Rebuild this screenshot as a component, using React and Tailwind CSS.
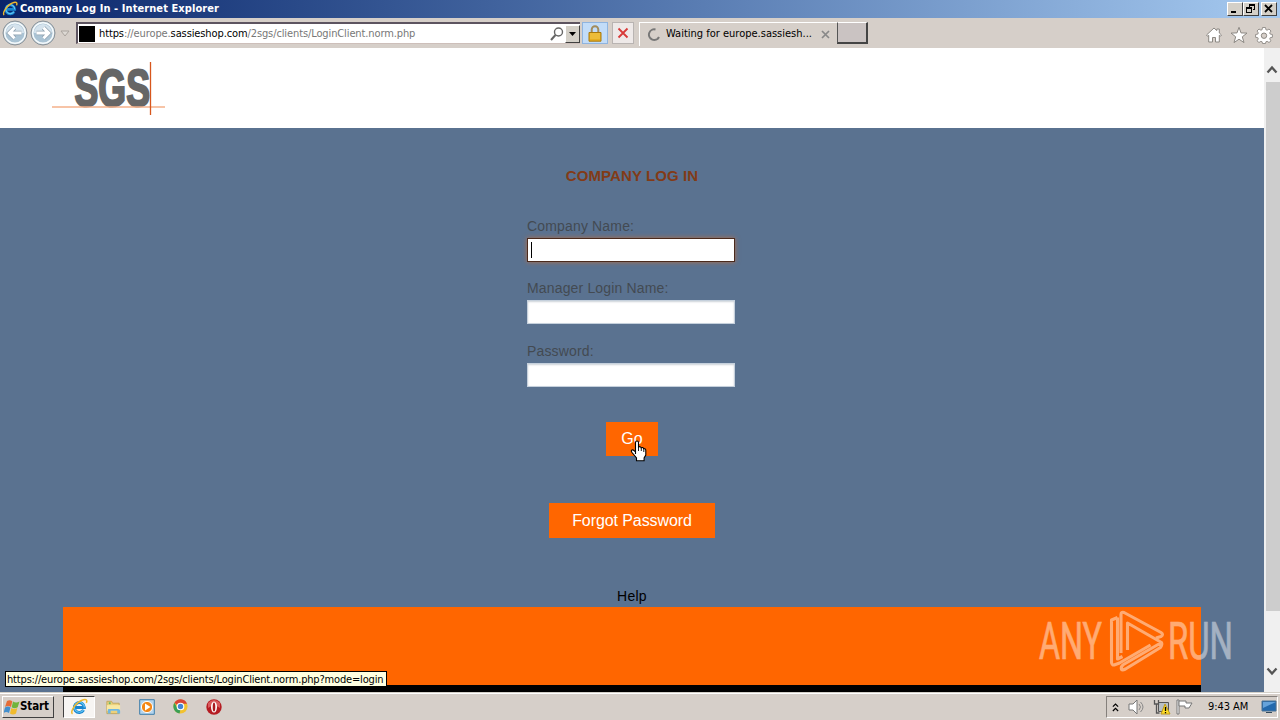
import React from "react";

const ui = "font-['DejaVu_Sans_Condensed','DejaVu_Sans',sans-serif] whitespace-nowrap";

function IELogo({ className }) {
  return (
    <svg viewBox="0 0 18 18" className={className}>
      <path d="M13.6 12.1A5 5 0 1 1 14.3 9.4H5.2" fill="none" stroke="#1784cf" strokeWidth="3" />
      <path d="M13.6 11.8A5 5 0 1 1 14.3 9.4" fill="none" stroke="#63c6f3" strokeWidth="1.2" />
      <path d="M2.5 15.8C-.4 14 5.8 3.8 13.3 1.7c3.6-1 4 1.1 3 3.2" fill="none" stroke="#eeb82e" strokeWidth="1.5" />
    </svg>
  );
}

function WinButton({ children, className = "" }) {
  return (
    <div className={`flex h-[14px] w-4 items-center justify-center border border-t-white border-l-white border-r-[#404040] border-b-[#404040] bg-[#d4d0c8] ${className}`}>
      <svg viewBox="0 0 14 12" className="h-3 w-[14px]" shapeRendering="crispEdges">{children}</svg>
    </div>
  );
}

function TitleBar() {
  return (
    <div className="flex h-[18px] items-center bg-linear-to-r from-[#0a246a] to-[#a6caf0] pr-[3px] pl-[2px]">
      <IELogo className="h-4 w-4" />
      <span className={`${ui} ml-[2px] text-[11px] leading-[16px] font-bold tracking-[0.08px] text-white`}>
        Company Log In - Internet Explorer
      </span>
      <div className="ml-auto flex">
        <WinButton><path d="M3 8h5v2H3z" /></WinButton>
        <WinButton><path d="M5 1h6v2H5zM10 3h1v4h-1zM9 6h1v1H9zM5 3h1v1H5zM2 4h6v2H2zM2 6h1v4H2zM7 6h1v4H7zM2 9h6v1H2z" /></WinButton>
        <WinButton className="ml-[2px]"><path d="M3 2l7 7M10 2L3 9" stroke="#000" strokeWidth="1.8" shapeRendering="auto" /></WinButton>
      </div>
    </div>
  );
}

function NavCircle({ flip }) {
  return (
    <svg viewBox="0 0 26 26" className="h-[26px] w-[28px]">
      <circle cx="13" cy="13" r="12" fill="#b9cbd6" stroke="#8b9298" />
      <circle cx="13" cy="13" r="10.3" fill="#aac3d4" stroke="#f5fafc" strokeWidth="1.5" />
      <path d="M4 13a9 9 0 0 1 18 0z" fill="#d5e3ed" />
      <g transform={flip ? "translate(26 0) scale(-1 1)" : undefined} fill="none">
        <path d="M19.5 13H8M12.5 7.8 7.3 13l5.2 5.2" stroke="#91a3b1" strokeWidth="4.5" />
        <path d="M19.5 13H8M12.5 7.8 7.3 13l5.2 5.2" stroke="#fff" strokeWidth="3" />
      </g>
    </svg>
  );
}

function Toolbar() {
  return (
    <div className="flex h-[30px] items-start bg-[#d6cfc9] pt-[2px]">
      <div className="flex h-[26px] w-[75px] items-center pl-[1px]">
        <NavCircle />
        <NavCircle flip />
        <svg viewBox="0 0 10 7" className="ml-[3px] h-[7px] w-[10px]"><path d="M1 1h8L5 6z" fill="#ddd9d4" stroke="#aaa49e" /></svg>
      </div>
      <div className="mt-[2px] ml-[1px] flex h-[22px] w-[504px] items-center border-t-2 border-l-2 border-t-[#5d5460] border-l-[#5d5460] border-b border-b-[#cdbfba] bg-white">
        <div className="ml-[1px] h-4 w-4 bg-black" />
        <span className={`${ui} mt-px ml-[4px] text-[11px] tracking-[-0.11px] text-[#777]`}>
          <span className="text-black">https</span>://europe.<span className="text-black">sassieshop.com</span>/2sgs/clients/LoginClient.norm.php
        </span>
        <svg viewBox="0 0 16 16" className="ml-auto h-4 w-[17px]"><circle cx="10" cy="6" r="4" fill="none" stroke="#666" strokeWidth="1.4" /><path d="M7 9 2.5 14" stroke="#666" strokeWidth="2" /></svg>
        <div className="flex h-[18px] w-[15px] items-center justify-center border border-t-white border-l-white border-r-[#404040] border-b-[#404040] bg-[#d4d0c8]">
          <svg viewBox="0 0 7 4" className="h-1 w-[7px]"><path d="M0 0h7L3.5 4z" /></svg>
        </div>
      </div>
      <div className="mt-[2px] ml-[2px] flex h-[22px] w-[26px] items-center justify-center border border-[#8fb4df] bg-[#c2dcf8]">
        <svg viewBox="0 0 14 17" className="h-[17px] w-[14px]">
          <path d="M3.7 8V4.5a3.3 3.3 0 0 1 6.6 0V8" fill="none" stroke="#a38c5c" strokeWidth="2" />
          <path d="M1 7.5h12v8.7H1z" fill="#e6ae20" stroke="#a8780c" />
          <path d="M2 9h10M2 11h10M2 13h10" stroke="#f9d769" strokeWidth=".7" />
        </svg>
      </div>
      <div className="mt-[2px] ml-[4px] flex h-[22px] w-[22px] items-center justify-center border border-[#b9b4b2] bg-[#eee9e8]">
        <svg viewBox="0 0 12 12" className="h-3 w-3"><path d="m1.5 1.5 9 9m0-9-9 9" stroke="#d83a39" strokeWidth="1.8" /></svg>
      </div>
      <div className="mt-[2px] ml-[5px] flex h-[24px] w-[198px] items-center border-t border-l border-white pl-[7px]">
        <svg viewBox="0 0 14 14" className="h-[14px] w-[14px]"><path d="M8.5 1.5A5.3 5.3 0 1 0 12 9" fill="none" stroke="#777" strokeWidth="2" /></svg>
        <span className={`${ui} ml-[5px] text-[11px] tracking-[0px] text-black`}>Waiting for europe.sassiesh...</span>
        <svg viewBox="0 0 9 9" className="ml-auto mr-[7px] h-[9px] w-[9px]"><path d="m1 1 7 7m0-7L1 8" stroke="#888" strokeWidth="1.7" /></svg>
      </div>
      <div className="mt-[2px] h-[22px] w-[31px] border border-t-white border-l-[#555] border-r-2 border-b-2 border-r-[#444] border-b-[#444] bg-[#cac3c2]" />
      <div className="mt-[6px] mr-[7px] ml-auto flex gap-[7px]">
        <svg viewBox="0 0 18 18" className="h-[18px] w-[18px]"><path d="M1.5 9 9 2l2.8 2.6V3h2.5v4L16.5 9l-1 1.2-1.2-.9V16h-3.8v-4.5h-3V16H3.7V9.3l-1.2.9z" fill="#fff" stroke="#8c8883" /></svg>
        <svg viewBox="0 0 18 18" className="h-[18px] w-[18px]"><path d="m9 1.3 2 5.6 6 .2-4.7 3.7 1.7 5.8L9 13.2l-5 3.4 1.7-5.8L1 7.1l6-.2z" fill="#fff" stroke="#8c8883" /></svg>
        <svg viewBox="0 0 18 18" className="h-[18px] w-[18px]">
          <path d="M7.5 1.5h3l.4 2.2 1.2.5L14 3l2 2-1.3 1.9.5 1.2 2.2.4v2.8l-2.2.4-.5 1.2L16 14.8l-2 1.7-1.9-1.2-1.2.5-.4 1.7h-3l-.4-1.7-1.2-.5L4 16.5l-2-1.7 1.3-1.9-.5-1.2-2.2-.4V8.5l2.2-.4.5-1.2L2 5l2-2 1.9 1.2 1.2-.5z" fill="#fff" stroke="#8c8883" strokeWidth=".9" />
          <circle cx="9" cy="9.7" r="2.7" fill="#d6cfc9" stroke="#8c8883" />
        </svg>
      </div>
    </div>
  );
}

function Brand() {
  return (
    <svg viewBox="0 -8 114 72" className="h-[72px] w-[114px]">
      <text x="22.5" y="44.3" textLength="75.5" lengthAdjust="spacingAndGlyphs" fontSize="51" fontWeight="700" fill="#666" stroke="#666" strokeWidth="2.2" className="font-['Liberation_Sans_Narrow','Liberation_Sans',sans-serif]">SGS</text>
      <path d="M0 45h113" stroke="#f5b08a" strokeWidth="1.5" />
      <path d="M98.5 0v53" stroke="#d7561d" strokeWidth="1.3" />
    </svg>
  );
}

function Field({ label, focused, className }) {
  return (
    <label className={`block w-[208px] ${className}`}>
      <span className="block h-[22px] text-[14px] leading-[20px] tracking-[0.16px] whitespace-nowrap text-[#434a52]">{label}</span>
      <div className={focused
        ? "flex h-6 items-center border border-[#4b2a1c] bg-white pl-[3px] shadow-[0_0_5px_#b06c48]"
        : "flex h-6 items-center border border-[#c5d0dc] bg-white pl-[3px] shadow-[inset_0_1px_2px_#ccd2d8]"}>
        {focused && <div className="h-4 w-px bg-black" />}
      </div>
    </label>
  );
}

function HandCursor() {
  return (
    <svg viewBox="0 0 17 22" className="absolute top-[18px] left-[24px] h-[22px] w-[17px]">
      <path d="M5.5 14V2.5q0-1.5 1.5-1.5t1.5 1.5V7q2-1 2.6.7 2-.8 2.4 1 2.3-.5 2.3 1.8V15l-1.7 3v2.7H6.5V18L2 12.5Q.7 10.6 2 10t3.5 2z" fill="#fff" stroke="#000" strokeWidth="1.1" />
      <path d="M8.5 7v4m2.8-3v3m2.5-2v3" stroke="#000" strokeWidth=".9" />
    </svg>
  );
}

function Watermark() {
  return (
    <svg viewBox="0 -4 206 74" className="absolute top-[556px] left-[1036px] h-[74px] w-[206px] opacity-45">
      <g fill="#fff" stroke="#fff" strokeWidth=".7" fontSize="52" fontWeight="400" className="font-[Roboto,'Open_Sans',sans-serif]">
        <text x="3" y="51" textLength="63" lengthAdjust="spacingAndGlyphs">ANY</text>
        <text x="132" y="51" textLength="65" lengthAdjust="spacingAndGlyphs">RUN</text>
      </g>
      <path
        d="M81.5 9.5 75.5 12V54q0 4 4 2.5l4-1.5 31-18M81.5 9.5V51l5-2.500M120 30l5-1.500q3-2 0-4L88 4.500q-3-1-3 2V45M91.500 42V15l34 19.500-38 22q-3 2-2 5 1 1 4-.5l35-21.500q2-3 1-5"
        fill="none" stroke="#fff" strokeWidth="3.1" strokeLinejoin="round"
      />
    </svg>
  );
}

function ScrollBar() {
  return (
    <div className="flex w-4 flex-col items-center bg-[#f0f0f0]">
      <svg viewBox="0 0 12 9" className="mt-[17px] h-[9px] w-3"><path d="m1.5 7.5 4.5-5 4.5 5" fill="none" stroke="#555" strokeWidth="2.3" /></svg>
      <div className="mt-[8px] ml-px h-[529px] w-[14px] bg-[#cdcdcd]" />
      <svg viewBox="0 0 12 9" className="mt-[56px] h-[9px] w-3"><path d="m1.5 1.5 4.5 5 4.5-5" fill="none" stroke="#555" strokeWidth="2.3" /></svg>
    </div>
  );
}

function Page() {
  return (
    <div className="relative flex h-[644px]">
      <main className="flex w-[1264px] flex-col font-['Liberation_Sans',Arial,sans-serif]">
        <header className="h-20 bg-white pt-[6px] pl-[52px]"><Brand /></header>
        <section className="flex h-[564px] flex-col items-center bg-[#5a7290]">
          <h1 className="mt-[38px] h-5 text-[15px] leading-5 font-bold tracking-[0.1px] text-[#823b17]">COMPANY LOG IN</h1>
          <Field label="Company Name:" focused className="mt-[30px] mr-[2px]" />
          <Field label="Manager Login Name:" className="mt-[16px] mr-[2px]" />
          <Field label="Password:" className="mt-[17px] mr-[2px]" />
          <button className="relative mt-[35px] h-[34px] w-[52px] bg-[#ff6600] text-[16px] text-white">Go<HandCursor /></button>
          <button className="mt-[47px] h-[35px] w-[166px] bg-[#ff6600] pt-px text-[16px] tracking-[-0.08px] whitespace-nowrap text-white">Forgot Password</button>
          <a className="mt-[48px] h-5 text-[14px] leading-5 tracking-[0.25px] text-black">Help</a>
          <footer className="mt-px h-[86px] w-[1138px] border-b-[7px] border-black bg-[#ff6600]" />
        </section>
      </main>
      <ScrollBar />
      <Watermark />
      <div className={`${ui} absolute top-[623px] left-[5px] h-4 w-[382px] border border-black bg-[#ffffe1] pl-px text-[11px] leading-[15px] tracking-[-0.17px] text-black`}>
        https://europe.sassieshop.com/2sgs/clients/LoginClient.norm.php?mode=login
      </div>
    </div>
  );
}

function TaskBar() {
  return (
    <div className="flex h-7 items-center border-t border-[#d4d0c8] bg-[#d6cfc9] pr-[2px] pl-[2px] shadow-[inset_0_1px_0_#fff]">
      <div className="mt-[1px] flex h-[22px] w-[52px] items-center border border-t-white border-l-white border-r-[#404040] border-b-[#404040] pl-[1px]">
        <svg viewBox="0 0 16 16" className="h-4 w-4">
          <path d="M3 2q3-1.500 5.300.3L7 8Q4 6 1 8z" fill="#e66d37" />
          <path d="M9 2.600q3 2 6.500 0L13.700 8.200q-3.500 2-6 0z" fill="#70b43c" />
          <path d="M1 8.500q3-2 5.500 0L5 14q-3-2-5.500 0z" fill="#438fcd" />
          <path d="M7.300 9q3 2 6 0L12 14.400q-3 2-6 0z" fill="#f1bb2c" />
        </svg>
        <span className={`${ui} text-[11.500px] font-bold tracking-[-0.1px] text-black`}>Start</span>
      </div>
      <div className="mt-[1px] ml-[9px] flex h-[22px] w-[32px] items-center justify-center border border-t-[#404040] border-l-[#404040] border-r-white border-b-white bg-[#f7f5f3]"><IELogo className="h-[18px] w-[18px]" /></div>
      <svg viewBox="0 0 18 18" className="ml-[10px] h-[18px] w-[17px]">
        <path d="M2 3h5l1 2h7v11H2z" fill="#edd17b" stroke="#c4a75b" /><path d="M2 7h14v6H2z" fill="#f8e8a3" /><path d="M3 16v-4q0-1 1-1h10q2 0 2 2v3h-3v-3H6v3z" fill="#6fb7e1" /><path d="M4 4h2v2H4z" fill="#65b866" />
      </svg>
      <svg viewBox="0 0 16 16" className="ml-[17px] h-4 w-4">
        <path d="M.7.7h14.6v14.6H.7z" fill="#b5d5ee" stroke="#3e7da9" /><circle cx="8" cy="8" r="5.600" fill="#f48716" stroke="#fff" /><path d="m6 4.500 5.500 3.500L6 11.500z" fill="#fff" />
      </svg>
      <svg viewBox="0 0 16 16" className="ml-[18px] h-[15px] w-[15px]">
        <circle cx="8" cy="8" r="7.5" fill="#f2c22f" /><path d="M1.5 4A7.5 7.5 0 0 1 15 5H8v4z" fill="#d84436" /><path d="M1.5 4 5 10l3 1-1 4.400A7.5 7.5 0 0 1 1.5 4" fill="#3b9f55" /><circle cx="8" cy="8" r="3.500" fill="#4385d5" stroke="#fff" strokeWidth="1.2" />
      </svg>
      <svg viewBox="0 0 16 16" className="ml-[18px] h-4 w-4"><circle cx="8" cy="8" r="7.700" fill="#b51c22" /><path d="M2 4q6-6 12 0v5Q8 4 2 9z" fill="#d95a5d" /><ellipse cx="8" cy="8" rx="3" ry="5.600" fill="#fff" /><ellipse cx="8" cy="8" rx="1.300" ry="4.500" fill="#a9191f" /></svg>
      <div className="mt-[1px] ml-auto flex h-[22px] w-[192px] items-center border border-t-[#85807c] border-l-[#85807c] border-r-white border-b-white max-w-[172px]">
        <svg viewBox="0 0 8 10" className="ml-[5px] h-[9px] w-[7px]"><path d="m1 4 3-3 3 3M1 9l3-3 3 3" fill="none" stroke="#000" strokeWidth="1.4" /></svg>
        <svg viewBox="0 0 18 16" className="ml-[9px] h-4 w-[18px]"><path d="M1 5h4l4-4v14l-4-4H1z" fill="#fff" stroke="#777" /><path d="M11 5q3 3 0 6m1.500-8q5 5 0 10" fill="none" stroke="#888" /></svg>
        <svg viewBox="0 0 18 16" className="ml-[7px] h-4 w-[18px]"><path d="M5.5 3.500h10v9h-10z" fill="#b9c0c5" stroke="#555" /><path d="M1.500 1v4h4V1m-2 4v9h3" fill="none" stroke="#555" strokeWidth="1.300" /><path d="m12 5 5 10H8z" fill="#ffde27" stroke="#bd981d" /><path d="M12.500 8v4m0 1v1.300" stroke="#000" strokeWidth="1.300" /></svg>
        <svg viewBox="0 0 17 16" className="ml-[5px] h-4 w-[17px]"><path d="M1 1h2v14H1z" fill="#fff" stroke="#777" /><path d="M3 2h7v2h6l-3 5H9V7H3z" fill="#fff" stroke="#777" /></svg>
        <span className={`${ui} ml-[15px] mt-px text-[11px] tracking-[-0.05px] text-black`}>9:43 AM</span>
        <svg viewBox="0 0 17 14" className="mr-[-1px] ml-auto h-[14px] w-[17px]"><path d="M1 1h14v10H1z" fill="#2269ad" stroke="#4a7294" /><path d="M2 2h13L2 8z" fill="#65a3db" /><path d="M5 12h6v1H5z" fill="#334a5d" /></svg>
      </div>
    </div>
  );
}

export default function App() {
  return (
    <div className="flex h-[720px] w-[1280px] flex-col overflow-hidden">
      <TitleBar />
      <Toolbar />
      <Page />
      <TaskBar />
    </div>
  );
}
